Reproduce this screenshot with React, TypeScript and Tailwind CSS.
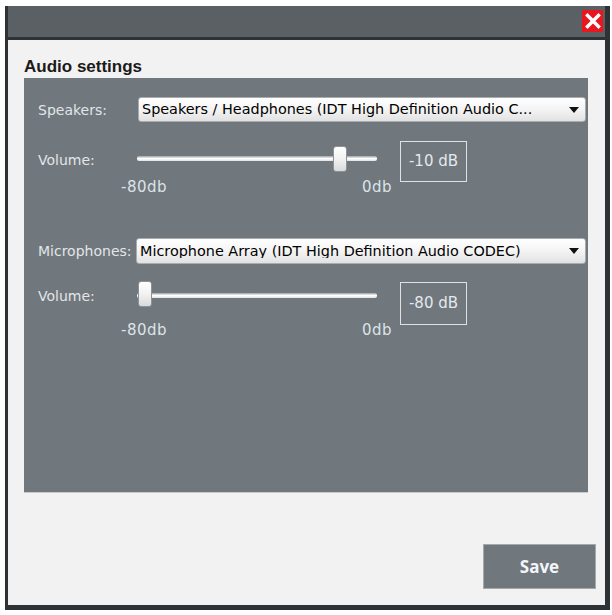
import React from "react";

const labelFont = { fontFamily: '"DejaVu Sans", Verdana, sans-serif' };

function Select({ text }: { text: string }) {
  return (
    <div className="flex h-full flex-1 items-center justify-between rounded-[3px] border border-[#a9acae] bg-gradient-to-b from-white via-[#f4f4f4] to-[#e2e2e2] pl-[3px] pr-[6px]">
      <span className="truncate text-[14.4px] leading-none text-black">{text}</span>
      <svg width="10" height="6" viewBox="0 0 10 6" className="shrink-0">
        <path d="M0 0 H10 L5 6 Z" fill="#111" />
      </svg>
    </div>
  );
}

function Slider({ thumbLeft, trackTop, thumbTop }: { thumbLeft: number; trackTop: number; thumbTop: number }) {
  return (
    <div className="relative h-full w-[240px]">
      <div
        className="absolute left-0 h-[5px] w-full rounded-[2px] bg-gradient-to-b from-[#9ea3a7] via-white to-[#dfe1e3]"
        style={{ top: trackTop }}
      />
      <div
        className="absolute h-[26px] w-[14px] rounded-[3px] border border-[#8d9296] bg-gradient-to-b from-white via-[#f2f2f2] to-[#d9dadb]"
        style={{ left: thumbLeft, top: thumbTop }}
      />
    </div>
  );
}

function Scale() {
  return (
    <div className="-mt-[3px] flex h-[16px] items-center text-[15px] leading-none tracking-[0.5px] text-[#dde3e8]">
      <span className="ml-[83px] w-[47px]">-80db</span>
      <span className="ml-[194px]">0db</span>
    </div>
  );
}

function DbBox({ value, h }: { value: string; h: string }) {
  return (
    <div className={`ml-[23px] flex w-[67px] items-center justify-center border border-[#dfe2e4] text-[15px] text-[#e4e8ec] ${h}`}>
      {value}
    </div>
  );
}

export default function App() {
  return (
    <div className="h-[615px] w-[612px] bg-white pl-[5px] pt-[6px]">
      <div className="flex h-[604px] w-[605px] flex-col border-b-[5px] border-l-[3px] border-r-[5px] border-[#2e3235]">
        <div className="flex h-[34px] justify-end border-b-[3px] border-[#2e3235] bg-[#5a6063] pr-[2px] pt-[4px]">
          <div className="flex h-[22px] w-[21px] items-center justify-center bg-[#e8161f]">
            <svg width="16" height="16" viewBox="0 0 16 16">
              <path d="M2.5 2.5 L13.5 13.5 M13.5 2.5 L2.5 13.5" stroke="white" strokeWidth="3.4" strokeLinecap="square" />
            </svg>
          </div>
        </div>
        <div className="flex flex-1 flex-col bg-[#f2f2f2] pl-[16px] pr-[17px] pt-[17px]" style={labelFont}>
          <div
            className="text-[17px] font-bold leading-[20px] text-[#1b1b1b]"
            style={{ fontFamily: '"Liberation Sans", Arial, sans-serif' }}
          >
            Audio settings
          </div>
          <div className="mt-[1px] h-[415px] border-b border-[#c9cbcd] bg-[#70777d] pl-[14px] pr-[2px] pt-[19px] text-[#e2e6e9]">
            <div className="flex h-[25px] items-center">
              <span className="w-[100px] text-[14px] leading-none">Speakers:</span>
              <Select text="Speakers / Headphones (IDT High Definition Audio C..." />
            </div>
            <div className="mt-[19px] flex h-[41px]">
              <span className="w-[99px] pt-[10px] text-[14px] leading-[18px]">Volume:</span>
              <Slider thumbLeft={196} trackTop={15} thumbTop={5} />
              <DbBox value="-10 dB" h="h-[41px]" />
            </div>
            <Scale />
            <div className="mt-[43px] flex h-[26px] items-center">
              <span className="w-[98px] text-[14px] leading-none">Microphones:</span>
              <Select text="Microphone Array (IDT High Definition Audio CODEC)" />
            </div>
            <div className="mt-[18px] flex h-[43px]">
              <span className="w-[99px] pt-[5px] text-[14px] leading-[18px]">Volume:</span>
              <Slider thumbLeft={1} trackTop={11} thumbTop={-1} />
              <DbBox value="-80 dB" h="h-[43px]" />
            </div>
            <Scale />
          </div>
          <div className="mt-[51px] flex justify-end pr-0">
            <button
              className="-mr-[8px] h-[45px] w-[113px] border border-[#a5a9ac] bg-[#70777d] text-[17px] font-bold text-[#f3f6f9]"
              style={{ fontFamily: '"Open Sans", sans-serif' }}
            >
              Save
            </button>
          </div>
        </div>
      </div>
    </div>
  );
}
